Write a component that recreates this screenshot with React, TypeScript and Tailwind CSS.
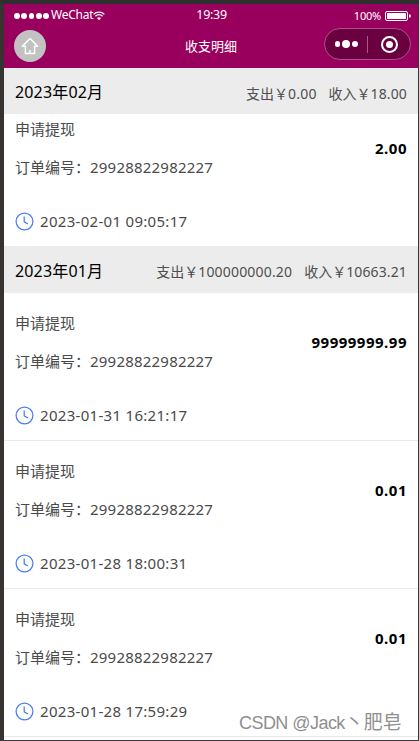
type Entry = { amount: string; time: string };
type Month = { year: string; month: string; out: string; income: string; entries: Entry[] };

const months: Month[] = [
  {
    year: '2023', month: '02', out: '0.00', income: '18.00',
    entries: [{ amount: '2.00', time: '2023-02-01 09:05:17' }],
  },
  {
    year: '2023', month: '01', out: '100000000.20', income: '10663.21',
    entries: [
      { amount: '99999999.99', time: '2023-01-31 16:21:17' },
      { amount: '0.01', time: '2023-01-28 18:00:31' },
      { amount: '0.01', time: '2023-01-28 17:59:29' },
    ],
  },
];

function StatusBar() {
  return (
    <div className="flex h-6 items-center text-[12px] leading-[22px] text-white">
      <div className="flex flex-1 items-center pl-[10px]">
        <div className="flex gap-[1.5px]">
          {[0, 1, 2, 3, 4].map((i) => (
            <i key={i} className="size-[5.8px] rounded-full bg-white" />
          ))}
        </div>
        <span className="-mt-[2px] ml-[2px] w-[42px] whitespace-nowrap tracking-[-0.25px]">WeChat</span>
        <svg width="12" height="10" viewBox="0 0 12 10" fill="none" stroke="white" strokeWidth="1.3">
          <path d="M.6 3.4C3.7.4 8.3.4 11.4 3.4M2.4 5.3C4.5 3.4 7.5 3.4 9.6 5.3" />
          <path d="M4 7.1C5.2 6 6.8 6 8 7.1L6 9.2Z" fill="white" stroke="none" />
        </svg>
      </div>
      <span className="-mt-[2px] mr-[2px] text-[12.5px] tracking-[-0.3px]">19:39</span>
      <div className="flex flex-1 items-center justify-end pr-[7px]">
        <span className="mr-[4px] text-[11px] tracking-[-0.2px]">100%</span>
        <svg width="26" height="10" viewBox="0 0 26 10" fill="none">
          <rect x=".5" y=".5" width="22" height="9" rx="1.5" stroke="white" />
          <rect x="2" y="2" width="19" height="6" rx=".5" fill="white" />
          <path d="M24 3.2Q26 3.5 26 5T24 6.8Z" fill="white" />
        </svg>
      </div>
    </div>
  );
}

function NavBar() {
  return (
    <div className="flex h-10 items-start pl-[10px] pr-[7px]">
      <div className="flex flex-1">
        <div className="mt-[2px] flex size-8 items-center justify-center rounded-full bg-[#c2c2c2]">
          <svg width="18" height="18" viewBox="0 0 18 18" fill="none" stroke="white" strokeWidth="1.5" strokeLinejoin="round">
            <path d="M9 1.5L1.3 9.3H4.4V16.4H13.6V9.3H16.7Z" />
            <path d="M9 13V16" />
          </svg>
        </div>
      </div>
      <h1 className="mr-[3px] mt-[8px] text-[13px] leading-5 text-white">收支明细</h1>
      <div className="flex flex-1 justify-end">
        <div className="flex h-8 w-[87px] items-center rounded-full border border-[#aa5288] bg-[#6b0041]">
          <div className="flex flex-1 items-center justify-center gap-[2px]">
            <i className="size-[5.5px] rounded-full bg-white" />
            <i className="size-[8px] rounded-full bg-white" />
            <i className="size-[5.5px] rounded-full bg-white" />
          </div>
          <div className="h-[17px] w-px bg-[#a35c87]" />
          <div className="flex flex-1 items-center justify-center">
            <div className="flex size-[17px] items-center justify-center rounded-full border-[2px] border-white">
              <i className="size-[7px] rounded-full bg-white" />
            </div>
          </div>
        </div>
      </div>
    </div>
  );
}

function Clock() {
  return (
    <svg width="19" height="19" viewBox="0 0 19 19" fill="none" stroke="#4c7df5" strokeWidth="1.25">
      <circle cx="9.5" cy="9.5" r="8.4" />
      <path d="M9.2 4.5V9.8L13 12" />
    </svg>
  );
}

function Row({ entry, compact }: { entry: Entry; compact: boolean }) {
  return (
    <li
      className={
        'flex justify-between pl-[11px] pr-[11px] text-[15px] text-[#4a4a4a] ' +
        (compact ? 'h-[132px]' : 'h-[148px] border-b border-[#e9e9e9] pt-[15px]')
      }
    >
      <div>
        <p className="mt-[3px] leading-6">申请提现</p>
        <p className="mt-[14px] whitespace-nowrap leading-6">
          订单编号：<span className="tracking-[0.21px]">29928822982227</span>
        </p>
        <div className="mt-[30px] flex h-6 items-center gap-[6px]">
          <Clock />
          <span className="whitespace-nowrap leading-6 tracking-[0.3px]">{entry.time}</span>
        </div>
      </div>
      <b className="mt-[22px] font-bold leading-6 tracking-[0.5px] text-black">{entry.amount}</b>
    </li>
  );
}

export default function App() {
  return (
    <div className="h-[741px] w-[419px] overflow-hidden border-b border-l-4 border-r border-t-4 border-b-[#3c3c3c] border-l-[#363330] border-r-[#363636] border-t-[#2f2f2f] bg-white font-['Noto_Sans','Noto_Sans_CJK_SC',sans-serif]">
      <header className="h-16 bg-[#99005d]">
        <StatusBar />
        <NavBar />
      </header>
      {months.map((m, i) => (
        <section key={m.month}>
          <div className={'flex items-center justify-between bg-[#ececec] pl-[11px] pr-[11px] ' + (i === 0 ? 'h-[46px]' : 'h-[47px]')}>
            <h2 className="pt-[2px] text-[16px] leading-6 tracking-[0.15px] text-black">
              {m.year}年{m.month}月
            </h2>
            <div className="flex gap-[12px] whitespace-nowrap pt-[5px] text-[14px] leading-6 text-[#4f4f4f]">
              <span>支出￥<span className="tracking-[0.18px]">{m.out}</span></span>
              <span>收入￥<span className="tracking-[0.12px]">{m.income}</span></span>
            </div>
          </div>
          <ul>
            {m.entries.map((e) => (
              <Row key={e.time} entry={e} compact={i === 0} />
            ))}
          </ul>
        </section>
      ))}
      <div className="absolute left-[239px] top-[709px] whitespace-nowrap font-['Liberation_Sans','Noto_Sans_CJK_SC',sans-serif] text-[19px] leading-7 text-[#8f8f8f]">
        <span className="text-[18px] tracking-[-0.55px]">CSDN @Jack</span>丶肥皂
      </div>
    </div>
  );
}
